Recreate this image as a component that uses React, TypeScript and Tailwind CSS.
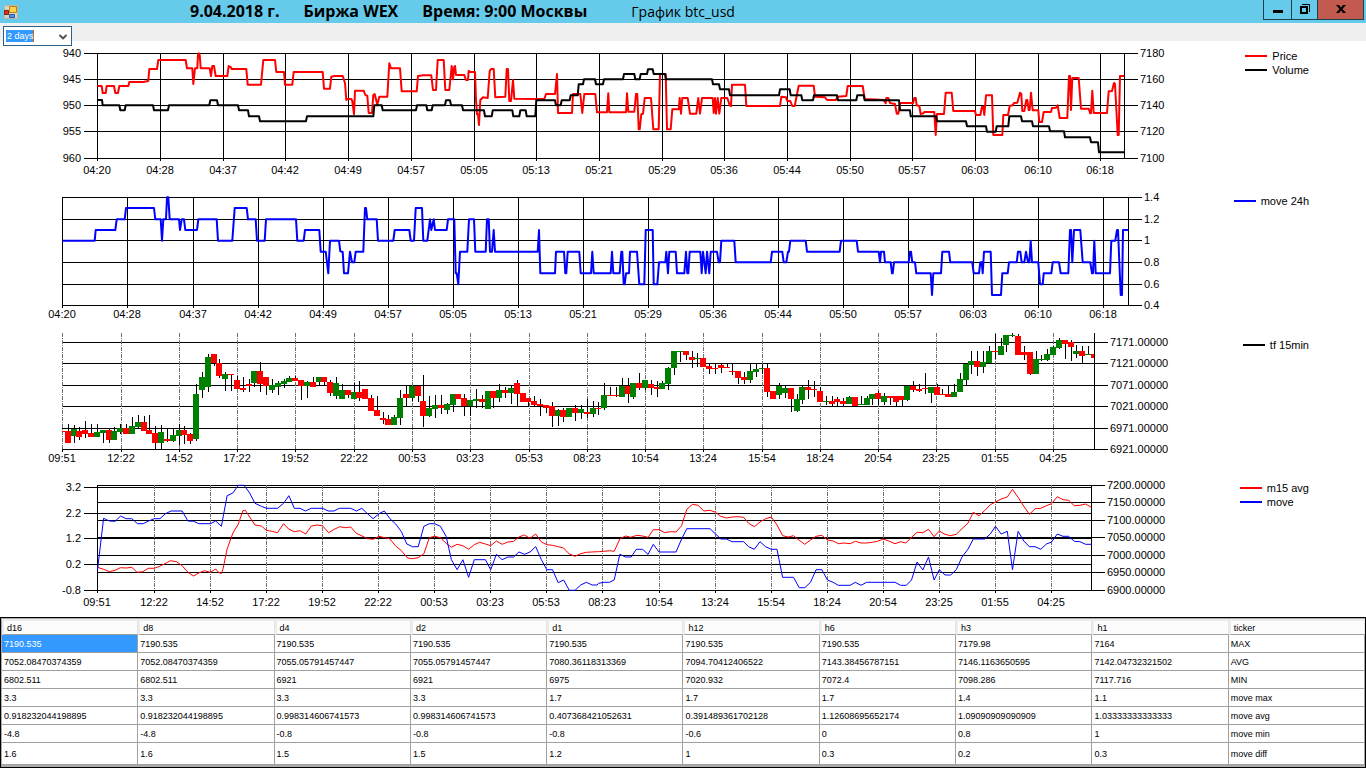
import { useState, type ReactNode } from 'react'
import { ChevronDown } from 'lucide-react'

type Chunk = [x0: number, scale: number, points: string]
type Tick = [pos: number, label: string]

// Series are stored as "x,y x,y ..." chunks: y in thirds of a pixel, x from x0 in 1/scale pixels.
function trace(chunks: Chunk[]): string {
  return chunks
    .flatMap(([x0, scale, points]) =>
      points.split(' ').map((p) => {
        const [x, y] = p.split(',').map(Number)
        return `${(x0 + x / scale).toFixed(1)},${(y / 3).toFixed(1)}`
      })
    )
    .join(' ')
}

const PRICE: Chunk[] = [
  [0, 3, '292,258 305,258 308,279 317,279 320,258 342,258 346,279 354,279 358,258 385,258 388,246 430,246 445,243 448,207 471,207 475,180 557,180 561,205 577,205 580,252 585,205 592,205 594,165 597,160 599,165 602,205 629,205 633,228 637,198 642,198 647,228 682,228 686,198 693,202 695,207 739,207 743,254 783,254 790,180 825,180 829,216 852,216 855,254 877,254 881,216 968,216 972,266 990,266 994,230 1003,228 1028,228 1035,249 1039,300 1043,297 1054,297 1057,303 1062,343 1065,272 1091,272 1096,285 1102,287 1106,339 1116,339 1120,285 1124,282 1132,314 1138,290 1162,290 1168,190 1173,205 1200,205 1205,274 1250,274 1254,228 1270,226 1294,226 1299,270 1308,270 1313,180 1331,180 1336,270 1348,270 1355,198 1359,238 1363,200'],
  [455, 3, '0,198 3,225 28,225 33,240 39,240 41,212 45,216 60,216 63,300 66,343 69,343 72,375 76,300 84,292 98,294 104,213 108,207 116,207 121,292 151,290 155,207 159,207 163,303 168,303 174,240 178,296 240,297 268,297 273,282 300,282 306,222 309,339 351,339 354,282 376,282 382,339 388,282 421,282 426,337 456,337 460,280 463,337 513,337 516,280 520,335 538,335 543,282 547,282 551,388 554,388 559,343 564,341 569,294 588,294 595,388 611,388 615,222 632,222 636,388 647,388 652,328 671,328 674,294 678,341 682,294 698,294 705,341 724,341 730,294 735,341 741,294 773,294 776,339 780,294 783,341 788,294 793,341 799,294 817,294 824,316 828,319 831,254 870,254 874,318 975,318 979,290 993,292 997,303 1006,303 1012,318 1019,318 1031,257 1076,257 1080,290 1110,292 1116,300 1143,300 1147,290 1174,288 1178,258 1223,258 1229,297 1286,300 1292,310 1294,294 1300,294 1305,309 1320,312 1325,341 1330,341 1335,309 1365,309'],
  [910, 3, '0,309 9,310 13,294 17,294 20,316 28,318 32,342 40,340 43,336 73,336 77,405 81,342 102,342 107,278 125,278 130,333 195,333 198,345 211,345 216,320 220,320 223,345 228,286 246,286 250,405 277,405 280,345 294,345 299,318 308,316 312,309 322,308 330,278 334,282 337,333 343,333 349,300 352,300 356,330 359,330 363,278 368,331 385,331 388,366 396,366 401,336 423,336 426,324 438,323 443,316 449,354 472,354 477,228 480,228 483,330 487,234 506,234 513,326 536,326 541,340 543,340 547,272 551,339 591,339 596,274 606,273 612,249 615,252 623,405 626,405 630,228 643,228']
]

const VOLUME: Chunk[] = [
  [0, 3, '292,300 306,300 308,316 358,316 361,331 374,331 377,316 459,316 462,331 504,331 507,316 628,316 631,301 651,301 654,316 714,316 717,331 744,331 747,349 777,349 780,364 918,364 921,349 1120,349 1123,316 1145,316 1148,331 1248,331 1251,316 1279,316 1282,331 1295,331 1298,316 1335,316 1338,301 1350,301 1353,316 1365,316'],
  [455, 3, '0,316 21,316 24,331 87,331 90,349 110,349 113,331 172,331 175,349 193,349 196,331 212,331 215,349 241,349 244,301 300,301 303,316 317,316 320,301 344,301 347,286 368,286 371,253 384,253 387,238 420,238 423,253 444,253 447,238 504,238 507,222 538,222 541,238 554,238 557,222 576,222 579,208 593,208 596,222 630,222 633,238 771,238 774,253 792,253 795,268 822,268 825,286 972,286 975,268 1004,268 1007,286 1039,286 1042,301 1074,301 1077,286 1146,286 1149,301 1204,301 1207,286 1226,286 1229,301 1332,301 1335,331 1365,331'],
  [910, 3, '0,331 2,349 78,349 81,364 168,364 171,379 228,379 231,395 257,395 260,379 295,379 298,349 333,349 336,364 366,364 369,379 417,379 420,394 462,394 465,412 540,412 543,427 564,427 567,457 643,457']
]

const MOVE_24H: Chunk[] = [
  [40, 3, '67,182 164,182 167,150 226,150 230,118 254,118 258,84 342,84 346,118 362,118 366,182 370,118 378,118 381,52 385,52 389,118 417,118 420,150 425,118 432,118 436,150 471,150 475,118 530,118 534,182 577,182 584,84 620,84 624,118 647,118 651,182 674,182 678,118 768,118 772,182 791,182 795,150 838,150 842,215 857,215 865,280 870,182 897,182 901,214 908,216 912,280 924,280 930,215 936,247 943,247 947,215 970,215 975,84 978,84 982,118 1010,118 1014,182 1060,182 1064,150 1108,150 1112,182 1122,182 1127,84 1146,84 1150,182 1162,182 1170,118 1174,150 1181,118 1185,150 1200,150'],
  [440, 3, '0,150 20,150 24,118 43,118 47,280 50,280 55,313 60,215 82,215 87,118 102,118 106,215 137,215 141,118 146,118 150,215 156,215 161,150 165,215 293,215 297,150 301,280 345,280 348,215 372,215 376,280 379,280 383,215 418,215 422,280 453,280 457,215 461,280 512,280 516,215 520,280 539,280 544,215 547,215 551,313 554,313 558,280 567,280 570,215 591,215 598,313 613,313 617,150 638,150 641,313 652,313 657,247 676,247 679,215 684,280 688,215 707,215 711,280 733,280 738,215 742,280 745,280 749,215 781,215 785,280 789,215 797,280 801,215 808,280 812,215 831,215 836,247 840,247 844,182 883,182 887,247 992,247 996,215 1027,215 1031,247 1039,247 1044,215 1047,215 1051,182 1097,182 1101,215 1198,215'],
  [840, 3, '-1,215 3,182 50,182 54,215 116,215 120,247 123,215 132,215 135,247 152,247 156,280 158,280 162,247 206,247 210,215 213,215 217,247 225,247 229,280 272,280 276,345 280,280 303,280 307,215 327,215 331,247 397,247 401,280 417,280 421,247 425,247 428,280 432,215 452,215 456,345 483,345 487,280 503,280 507,247 530,247 534,215 541,215 545,247 553,247 558,215 564,247 568,247 572,182 576,247 595,247 600,313 608,313 611,280 634,280 638,247 657,247 662,280 685,280 690,150 693,150 697,247 702,150 721,150 728,247 751,247 756,280 759,280 763,182 767,280 810,280 814,182 826,182 831,150 834,150 842,345 846,345 849,150 865,150']
]

const M15_AVG: Chunk[] = [
  [40, 2.8, '161,277 178,283 194,290 210,286 225,278 242,279 257,277 272,292 288,290 303,280 320,280 335,274 350,266 365,257 382,260 398,272 414,292 430,303 446,293 461,287 477,292 492,282 500,292 508,296 513,280 524,222 540,174 555,148 568,107 575,106 587,126 602,150 620,153 634,166 650,169 665,173 682,146 696,162 712,170 728,167 744,177 760,153 775,150 791,152 808,173 824,163 839,155 855,158 870,156 886,175 902,183 917,191 933,193 949,184 965,188 979,191 996,213 1012,227 1029,249 1043,251 1059,248 1075,236 1090,188 1105,184 1121,188 1137,205 1152,217 1168,208 1184,212 1200,223 1216,209 1231,202 1247,207 1262,212 1278,198 1294,208 1310,201 1326,199 1341,186 1356,180 1372,190 1388,177 1404,201 1419,209 1435,211 1451,215 1466,219 1482,237 1498,244 1514,236 1530,232 1560,230'],
  [600, 2.119, '-3,230 8,229 20,227 30,229 42,192 54,183 65,187 78,181 90,183 102,187 113,164 125,164 137,173 149,170 161,171 173,152 184,103 196,88 208,91 220,108 233,106 245,112 256,124 268,129 280,126 292,125 304,127 315,145 327,155 339,141 351,131 363,126 375,150 387,182 399,186 410,182 422,196 434,208 446,195 458,184 470,181 482,195 494,198 505,206 517,204 530,206 541,199 553,204 565,204 577,202 588,199 600,192 612,198 625,206 637,200 648,204 660,187 672,172 684,173 696,163 708,185 719,168 731,178 743,182 755,178 767,161 780,144 791,112 803,122 815,107 827,89 838,81 850,72 863,66 874,43 886,67 898,94 910,118 922,101 934,100 946,92 957,86 969,65 981,74 993,76 1005,92 1017,91 1029,87 1041,97']
]

const MOVE: Chunk[] = [
  [40, 2.8, '161,285 178,130 194,138 210,139 226,123 241,131 257,131 273,146 289,146 304,138 320,131 336,131 351,116 367,108 398,108 414,138 430,139 445,146 477,146 492,138 508,154 524,62 540,54 555,31 571,31 587,54 602,85 620,94 634,100 665,100 682,85 697,62 712,100 728,100 743,108 759,100 791,100 807,108 823,108 838,100 870,100 886,108 901,100 917,116 933,131 949,116 964,108 980,131 996,147 1012,170 1027,207 1043,215 1059,215 1075,154 1090,146 1105,146 1121,154 1137,184 1152,254 1168,284 1184,254 1200,307 1216,254 1247,254 1262,284 1278,238 1294,254 1310,246 1326,246 1341,231 1357,238 1372,231 1388,215 1404,254 1419,284 1435,284 1451,323 1466,315 1482,346 1498,346 1514,330 1530,322 1546,330 1560,330'],
  [600, 2.119, '-3,325 8,322 20,322 30,315 42,238 54,246 66,246 77,223 90,223 102,238 113,208 125,231 161,231 173,192 184,161 233,161 245,177 256,192 268,192 280,200 304,200 315,215 327,223 339,200 351,215 363,223 375,223 387,307 410,307 422,338 434,338 446,322 458,284 470,284 482,315 494,322 505,331 530,331 541,322 553,331 565,322 625,322 637,331 649,331 660,315 672,261 684,285 696,246 708,315 719,284 731,300 743,300 755,284 767,246 780,222 791,192 815,192 827,177 838,154 850,177 863,169 874,284 886,169 898,198 910,215 922,215 934,223 946,207 957,201 969,177 981,184 993,184 1005,199 1017,200 1029,208 1041,208']
]

// 15 minute candles: colour, body top, body bottom, wick top, wick bottom (thirds of a pixel)
const CANDLES = `r 317 320 317 320|r 318 353 297 353|g 312 332 299 353|r 318 335 306 345|r 315 327 288 338|r 324 335 297 335|g 320 335 297 335|g 315 323 315 353|r 315 345 312 353|g 317 345 306 345
g 308 321 297 327|r 309 326 297 326|g 303 326 276 326|g 290 305 270 311|r 290 317 272 317|r 315 326 271 326|r 323 353 303 373|g 320 353 300 373|r 342 348 312 350|g 330 348 309 350
g 315 333 297 360|r 315 329 303 356|r 327 347 324 356|g 207 341 176 348|g 156 195 142 218|g 96 186 87 201|r 87 115 87 123|r 113 153 102 160|g 147 161 140 197|r 147 150 147 197
r 165 192 154 192|r 189 195 157 201|r 177 182 162 201|g 138 174 138 186|r 138 177 112 201|r 156 183 156 210|g 180 195 162 204|g 174 186 168 210|g 168 177 162 188|g 158 171 153 171
r 159 168 153 168|r 165 183 165 225|g 171 183 168 220|r 171 186 156 186|g 156 171 156 180|r 156 171 156 180|r 171 204 165 213|g 174 213 156 222|g 195 222 177 222|r 195 210 195 218
g 201 222 174 222|r 201 219 168 228|r 192 221 192 221|r 219 258 210 258|r 255 273 213 273|r 279 285 261 297|r 282 300 270 300|g 276 300 270 300|g 219 279 195 300|r 207 219 180 243
g 183 219 183 228|r 183 213 183 231|r 228 273 151 306|g 249 273 213 276|g 240 252 210 279|r 240 249 210 267|g 236 255 234 267|g 207 240 207 261|r 207 222 207 222|r 219 243 207 272
g 225 243 225 272|g 222 228 192 249|r 222 231 210 249|g 198 252 198 252|r 198 219 198 249|g 195 219 177 231|r 195 204 186 219|g 189 204 183 237|r 174 207 165 243|r 204 231 204 231
r 219 231 219 243|r 228 240 213 243|r 237 243 222 273|r 240 249 240 264|r 244 273 231 306|g 255 273 252 303|r 255 276 249 290|g 249 276 249 276|r 249 264 240 288|g 252 264 240 282
r 261 267 222 279|g 249 267 228 276|r 248 252 231 270|g 210 249 174 255|r 209 213 186 213|r 209 213 186 216|g 183 216 159 216|r 183 207 159 234|g 174 216 174 222|r 174 189 144 195
g 165 189 165 195|r 177 189 165 210|r 185 192 168 216|g 174 192 168 192|g 129 177 126 195|g 78 129 78 150|g 77 81 77 111|r 78 90 78 105|r 96 105 78 129|g 98 102 84 126
r 99 126 99 126|r 123 132 114 147|r 128 132 117 147|r 120 129 114 144|r 126 130 117 130|r 138 141 117 150|r 138 159 138 177|r 156 165 141 177|g 138 165 117 174|g 132 141 117 156
g 128 132 117 147|r 129 201 117 216|r 198 222 198 222|g 183 210 174 222|g 189 204 183 219|r 189 222 189 261|g 222 258 207 261|g 186 225 180 237|r 186 195 165 222|r 192 195 168 216
r 198 231 186 231|g 228 231 213 240|r 228 237 213 243|r 222 231 216 243|r 228 237 219 243|g 216 237 213 237|r 216 243 216 243|g 237 240 213 240|g 219 240 213 240|g 207 222 207 240
r 204 222 198 240|g 213 231 204 240|r 213 219 213 240|r 213 231 213 243|r 213 225 213 243|g 183 225 180 228|r 183 195 168 201|r 192 198 177 201|r 188 191 145 207|g 186 204 186 234
r 186 210 177 210|r 207 210 192 210|r 207 216 183 216|g 201 216 177 216|g 162 201 145 201|g 117 165 117 180|g 108 120 79 147|r 108 126 79 152|g 111 126 79 144|g 78 114 62 114
r 77 81 27 102|g 63 90 40 90|g 30 60 30 80|g 29 33 25 36|r 33 90 27 90|r 81 90 62 105|r 81 147 81 150|g 102 147 79 147|g 101 105 90 109|g 87 105 72 109
g 66 90 62 90|g 45 69 40 72|r 45 57 45 101|r 52 66 45 109|g 78 87 60 99|r 78 93 62 114|g 86 90 62 90|r 87 99 87 99`
  .split(/[|\n]/)
  .map((row) => {
    const [color, ...v] = row.split(' ')
    const [top, bottom, high, low] = v.map((n) => Math.round(Number(n) / 3))
    return { fill: color === 'g' ? '#008000' : '#ff0000', top, bottom, high, low }
  })

const PRICE_X: Tick[] = [
  [97, '04:20'], [160, '04:28'], [223, '04:37'], [285, '04:42'], [348, '04:49'], [411, '04:57'],
  [474, '05:05'], [536, '05:13'], [599, '05:21'], [662, '05:29'], [724, '05:36'], [787, '05:44'],
  [850, '05:50'], [912, '05:57'], [975, '06:03'], [1038, '06:10'], [1100, '06:18']
]

const MOVE_24H_X: Tick[] = [
  [62, '04:20'], [127, '04:28'], [193, '04:37'], [258, '04:42'], [323, '04:49'], [388, '04:57'],
  [453, '05:05'], [518, '05:13'], [583, '05:21'], [648, '05:29'], [713, '05:36'], [778, '05:44'],
  [843, '05:50'], [908, '05:57'], [973, '06:03'], [1038, '06:10'], [1103, '06:18']
]

const CANDLE_X: Tick[] = [
  [62, '09:51'], [121, '12:22'], [179, '14:52'], [237, '17:22'], [295, '19:52'], [354, '22:22'],
  [412, '00:53'], [470, '03:23'], [529, '05:53'], [587, '08:23'], [645, '10:54'], [703, '13:24'],
  [762, '15:54'], [820, '18:24'], [878, '20:54'], [936, '23:25'], [995, '01:55'], [1053, '04:25']
]

const AVG_X: Tick[] = [
  [97, '09:51'], [154, '12:22'], [210, '14:52'], [266, '17:22'], [322, '19:52'], [378, '22:22'],
  [434, '00:53'], [490, '03:23'], [546, '05:53'], [602, '08:23'], [659, '10:54'], [715, '13:24'],
  [771, '15:54'], [827, '18:24'], [883, '20:54'], [939, '23:25'], [995, '01:55'], [1051, '04:25']
]

interface ChartProps {
  title: string
  viewBox: string
  left: number
  right: number
  top: number
  bottom: number
  xTicks: Tick[]
  yLeft?: Tick[]
  yRight: Tick[]
  dashed?: boolean
  legend: [color: string, name: string][]
  legendClass: string
  children: ReactNode
}

function Chart(props: ChartProps) {
  const { title, viewBox, left, right, top, bottom, xTicks, yLeft = [], yRight, dashed, legend } = props
  return (
    <section className="grid grid-cols-[1fr_166px]">
      <svg viewBox={viewBox} role="img" aria-label={title} className="block h-auto w-full text-[11px]">
        <g stroke="#000" shapeRendering="crispEdges">
          {yLeft.map(([y]) => (
            <line key={`l${y}`} x1={left - 13} x2={right} y1={y + 0.5} y2={y + 0.5} />
          ))}
          {yRight.map(([y]) => (
            <line key={`r${y}`} x1={left} x2={right + 14} y1={y + 0.5} y2={y + 0.5} />
          ))}
          {xTicks.map(([x]) => (
            <line
              key={x}
              x1={x + 0.5}
              x2={x + 0.5}
              y1={top}
              y2={bottom}
              stroke={dashed ? '#707070' : '#000'}
              strokeDasharray={dashed ? '4 1 1 1' : undefined}
            />
          ))}
          {xTicks.map(([x]) => (
            <line key={x} x1={x + 0.5} x2={x + 0.5} y1={bottom} y2={bottom + 3} />
          ))}
          {yLeft.length > 0 && <line x1={left + 0.5} x2={left + 0.5} y1={top} y2={bottom} />}
          <line x1={right + 0.5} x2={right + 0.5} y1={top} y2={bottom} />
        </g>
        {props.children}
        {yLeft.map(([y, label]) => (
          <text key={label} x={81} y={y + 4} textAnchor="end">
            {label}
          </text>
        ))}
        {yRight.map(([y, label]) => (
          <text key={label} x={right + 16} y={y + 4}>
            {label}
          </text>
        ))}
        {xTicks.map(([x, label]) => (
          <text key={label} x={x} y={bottom + (yLeft.length ? 16 : 13)} textAnchor="middle">
            {label}
          </text>
        ))}
      </svg>
      <div className={`flex justify-end pr-[57px] ${props.legendClass}`}>
        <ul>
          {legend.map(([color, name]) => (
            <li key={name} className="flex items-center gap-[5px] text-[11px] leading-[14px]">
              <span className="h-[2px] w-[22px]" style={{ backgroundColor: color }} />
              {name}
            </li>
          ))}
        </ul>
      </div>
    </section>
  )
}

function Line({ data, color, width }: { data: Chunk[]; color: string; width: number }) {
  return <polyline points={trace(data)} fill="none" stroke={color} strokeWidth={width} strokeLinejoin="round" />
}

function FormIcon() {
  return (
    <svg width="14" height="14" viewBox="0 0 14 14" aria-hidden="true" className="shrink-0">
      <path d="M0.5 0.5h13v13h-13z" fill="#d9d3c4" stroke="#b9b4a6" />
      <path d="M0.5 5.5h4v4h-4z" fill="#d8341c" stroke="#8c1a0c" />
      <path d="M5.5 1.5h7v6h-7z" fill="#fbd24a" stroke="#b98512" />
      <path d="M5.5 9.5h5v3h-5z" fill="#5a94ea" stroke="#1f55b4" />
    </svg>
  )
}

function TitleBar() {
  return (
    <header className="flex h-[23px] bg-[#66cbea]">
      <div className="flex w-[190px] shrink-0 items-center pl-[4px]">
        <FormIcon />
      </div>
      <h1 className="flex items-center gap-6 whitespace-nowrap font-['Open_Sans',sans-serif] text-[16px] leading-[23px] font-bold">
        <span>9.04.2018 г.</span>
        <span>Биржа WEX</span>
        <span>Время: 9:00 Москвы</span>
      </h1>
      <p className="ml-11 whitespace-nowrap font-['Open_Sans',sans-serif] text-[14px] leading-[23px]">График btc_usd</p>
      <div className="mr-[2px] ml-auto flex h-[20px] border border-t-0 border-[#1f3f4a]">
        <button aria-label="Minimize" className="flex w-[28px] items-center justify-center border-r border-[#1f3f4a]">
          <svg width="10" height="12" viewBox="0 0 10 12">
            <path d="M0 6h10v3H0z" />
          </svg>
        </button>
        <button aria-label="Restore" className="flex w-[26px] items-center justify-center border-r border-[#1f3f4a] pb-px">
          <svg width="10" height="10" viewBox="0 0 10 10" fill="none" stroke="#000">
            <path d="M1 3h6v6H1z" strokeWidth="2" />
            <path d="M2 0.5h7.5V8" />
          </svg>
        </button>
        <button aria-label="Close" className="flex w-[45px] items-center justify-center bg-[#c35a50] pb-px">
          <svg width="10" height="8" viewBox="0 0 10 8">
            <path d="M0 0h3l2 2.500 2-2.500h3L6.500 4 10 8H7L5 5.500 3 8H0l3.500-4z" />
          </svg>
        </button>
      </div>
    </header>
  )
}

const COLUMNS = ['d16', 'd8', 'd4', 'd2', 'd1', 'h12', 'h6', 'h3', 'h1', 'ticker']

const ROWS = [
  ['7190.535', '7190.535', '7190.535', '7190.535', '7190.535', '7190.535', '7190.535', '7179.98', '7164', 'MAX'],
  ['7052.08470374359', '7052.08470374359', '7055.05791457447', '7055.05791457447', '7080.36118313369', '7094.70412406522', '7143.38456787151', '7146.1163650595', '7142.04732321502', 'AVG'],
  ['6802.511', '6802.511', '6921', '6921', '6975', '7020.932', '7072.4', '7098.286', '7117.716', 'MIN'],
  ['3.3', '3.3', '3.3', '3.3', '1.7', '1.7', '1.7', '1.4', '1.1', 'move max'],
  ['0.918232044198895', '0.918232044198895', '0.998314606741573', '0.998314606741573', '0.407368421052631', '0.391489361702128', '1.12608695652174', '1.09090909090909', '1.03333333333333', 'move avg'],
  ['-4.8', '-4.8', '-0.8', '-0.8', '-0.8', '-0.6', '0', '0.8', '1', 'move min'],
  ['1.6', '1.6', '1.5', '1.5', '1.2', '1', '0.3', '0.2', '0.3', 'move diff']
]

function StatsTable() {
  return (
    <div className="border border-black bg-[#ababab] pt-px pb-[2px] pl-px">
      <table className="w-full table-fixed border-separate border-spacing-0 text-left text-[9px]">
        <thead>
          <tr className="h-[16px] bg-[#fcfcfc]">
            {COLUMNS.map((c) => (
              <th
                key={c}
                scope="col"
                className="border-t-2 border-r border-b border-l-2 border-t-[#ececec] border-r-[#e4e4e4] border-b-[#a0a0a0] border-l-[#ececec] p-0 pt-[2px] pl-[3px] leading-[11px] font-normal"
              >
                {c}
              </th>
            ))}
          </tr>
        </thead>
        <tbody>
          {ROWS.map((row, r) => (
            <tr key={row[9]} className="h-[18px] bg-white last:h-[22px]">
              {row.map((v, c) => (
                <td
                  key={COLUMNS[c]}
                  className={`border-r border-b border-[#a0a0a0] p-0 pt-[2px] pl-[2px] leading-[15px] ${
                    r === 0 && c === 0 ? 'bg-[#3399ff] text-white' : ''
                  }`}
                >
                  {v}
                </td>
              ))}
            </tr>
          ))}
        </tbody>
      </table>
    </div>
  )
}

export default function App() {
  const [range, setRange] = useState('2 days')

  return (
    <div className="min-h-screen bg-white font-['Liberation_Sans',Arial,sans-serif] text-black">
      <TitleBar />
      <div className="h-[18px] bg-[#f0f0f0] pt-[3px] pl-[3px]">
        <div className="relative h-[20px] w-[69px]">
          <select
            aria-label="Period"
            value={range}
            onChange={(e) => setRange(e.target.value)}
            className="block h-full w-full appearance-none border border-[#2a628f] bg-white bg-[linear-gradient(to_right,#3399ff_27px,#cc6611_27px)] bg-[length:28px_12px] bg-[position:2px_3px] bg-no-repeat pl-[3px] text-[9px] leading-[18px] text-white outline-none"
          >
            <option className="text-black">2 days</option>
            <option className="text-black">4 days</option>
            <option className="text-black">8 days</option>
          </select>
          <ChevronDown size={12} strokeWidth={4} className="pointer-events-none absolute top-[5px] right-[3px] text-[#555]" />
        </div>
      </div>

      <Chart
        title="Price and volume"
        viewBox="0 41 1200 139"
        left={97}
        right={1124}
        top={53}
        bottom={158}
        xTicks={PRICE_X}
        yLeft={[[53, '940'], [79, '945'], [105, '950'], [131, '955'], [158, '960']]}
        yRight={[[53, '7180'], [79, '7160'], [105, '7140'], [131, '7120'], [158, '7100']]}
        legend={[['#ff0000', 'Price'], ['#000000', 'Volume']]}
        legendClass="pt-[8px]"
      >
        <Line data={PRICE} color="#ff0000" width={2} />
        <Line data={VOLUME} color="#000000" width={2} />
      </Chart>

      <Chart
        title="Move over 24 hours"
        viewBox="0 0 1200 145"
        left={62}
        right={1128}
        top={17}
        bottom={125}
        xTicks={MOVE_24H_X}
        yRight={[[17, '1.4'], [39, '1.2'], [60, '1'], [82, '0.8'], [104, '0.6'], [125, '0.4']]}
        legend={[['#0000ff', 'move 24h']]}
        legendClass="pt-[14px]"
      >
        <Line data={MOVE_24H} color="#0000ff" width={2} />
      </Chart>

      <Chart
        title="15 minute candles"
        viewBox="0 0 1200 150"
        left={62}
        right={1094}
        top={8}
        bottom={124}
        xTicks={CANDLE_X}
        yRight={[[17, '7171.00000'], [38, '7121.00000'], [60, '7071.00000'], [81, '7021.00000'], [103, '6971.00000'], [124, '6921.00000']]}
        dashed
        legend={[['#000000', 'tf 15min']]}
        legendClass="pt-[13px]"
      >
        <g shapeRendering="crispEdges">
          {CANDLES.map((c, i) => {
            const x = Math.round(62 + i * 5.83)
            // the outermost candles are cut at the plot edges
            const from = Math.max(x - 3, 62)
            const to = Math.min(x + 3, 1094)
            return (
              <g key={i}>
                <rect x={x} y={c.high} width={1} height={c.low - c.high} fill="#000" />
                <rect x={from} y={c.top} width={to - from} height={Math.max(c.bottom - c.top, 1)} fill={c.fill} />
              </g>
            )
          })}
        </g>
      </Chart>

      <Chart
        title="15 minute average and move"
        viewBox="0 0 1200 142"
        left={97}
        right={1091}
        top={10}
        bottom={115}
        xTicks={AVG_X}
        yLeft={[[12, '3.2'], [38, '2.2'], [63, '1.2'], [89, '0.2'], [115, '-0.8']]}
        yRight={[[10, '7200.00000'], [27, '7150.00000'], [45, '7100.00000'], [62, '7050.00000'], [80, '7000.00000'], [97, '6950.00000'], [115, '6900.00000']]}
        dashed
        legend={[['#ff0000', 'm15 avg'], ['#0000ff', 'move']]}
        legendClass="pt-[6px]"
      >
        <Line data={M15_AVG} color="#ff0000" width={1} />
        <Line data={MOVE} color="#0000ff" width={1} />
      </Chart>

      <StatsTable />
    </div>
  )
}
